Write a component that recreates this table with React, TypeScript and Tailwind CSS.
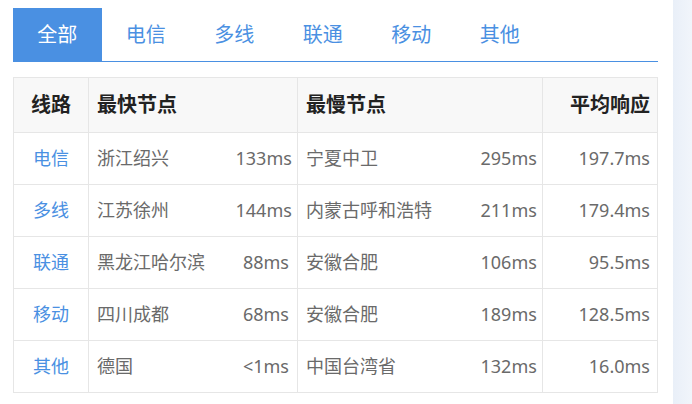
import { useState } from "react";

interface Row {
  line: string;
  fastNode: string;
  fastMs: string;
  slowNode: string;
  slowMs: string;
  avg: string;
}

const tabs = ["全部", "电信", "多线", "联通", "移动", "其他"];

const rows: Row[] = [
  { line: "电信", fastNode: "浙江绍兴", fastMs: "133ms", slowNode: "宁夏中卫", slowMs: "295ms", avg: "197.7ms" },
  { line: "多线", fastNode: "江苏徐州", fastMs: "144ms", slowNode: "内蒙古呼和浩特", slowMs: "211ms", avg: "179.4ms" },
  { line: "联通", fastNode: "黑龙江哈尔滨", fastMs: "88ms", slowNode: "安徽合肥", slowMs: "106ms", avg: "95.5ms" },
  { line: "移动", fastNode: "四川成都", fastMs: "68ms", slowNode: "安徽合肥", slowMs: "189ms", avg: "128.5ms" },
  { line: "其他", fastNode: "德国", fastMs: "<1ms", slowNode: "中国台湾省", slowMs: "132ms", avg: "16.0ms" },
];

export default function App() {
  const [active, setActive] = useState<number>(0);

  return (
    <div
      className="flex h-[404px] w-[692px] bg-white"
      style={{ fontFamily: '"Noto Sans", "Noto Sans CJK SC", sans-serif' }}
    >
      <div className="w-[673px] pl-[13px] pr-[15px] pt-[8px]">
        {/* 标签栏 */}
        <div className="flex border-b border-[#4a90e2]">
          {tabs.map((tab, i) => (
            <button
              key={tab}
              onClick={() => setActive(i)}
              className={`flex h-[53px] w-[88.5px] items-center justify-center text-[20px] ${
                active === i ? "bg-[#4a90e2] text-white" : "text-[#4a90e2]"
              }`}
            >
              {tab}
            </button>
          ))}
        </div>

        {/* 表格 */}
        <table className="mt-[15px] w-[644px] table-fixed border-collapse text-[18px] text-[#6a6a6a]">
          <colgroup>
            <col className="w-[75px]" />
            <col className="w-[139px]" />
            <col className="w-[70px]" />
            <col className="w-[175px]" />
            <col className="w-[70px]" />
            <col className="w-[115px]" />
          </colgroup>
          <thead>
            <tr className="h-[55px] bg-[#f8f8f8] text-[20px] font-bold text-[#222]">
              <th className="border border-[#e6e6e6] text-center">线路</th>
              <th colSpan={2} className="border border-[#e6e6e6] px-[8px] text-left">最快节点</th>
              <th colSpan={2} className="border border-[#e6e6e6] px-[8px] text-left">最慢节点</th>
              <th className="border border-[#e6e6e6] px-[7px] text-right">平均响应</th>
            </tr>
          </thead>
          <tbody>
            {rows.map((r) => (
              <tr key={r.line} className="h-[52px]">
                <td className="border border-[#e6e6e6] text-center text-[#4a90e2]">{r.line}</td>
                <td className="border-y border-l border-[#e6e6e6] px-[8px] whitespace-nowrap">{r.fastNode}</td>
                <td className="border-y border-r border-[#e6e6e6] px-[8px] text-right">{r.fastMs}</td>
                <td className="border-y border-l border-[#e6e6e6] px-[8px] whitespace-nowrap">{r.slowNode}</td>
                <td className="border-y border-r border-[#e6e6e6] px-[8px] text-right">{r.slowMs}</td>
                <td className="border border-[#e6e6e6] px-[7px] text-right">{r.avg}</td>
              </tr>
            ))}
          </tbody>
        </table>
      </div>
      <div className="flex-1 bg-gradient-to-r from-[#e9eff8] to-[#f1f5fb]" />
    </div>
  );
}
